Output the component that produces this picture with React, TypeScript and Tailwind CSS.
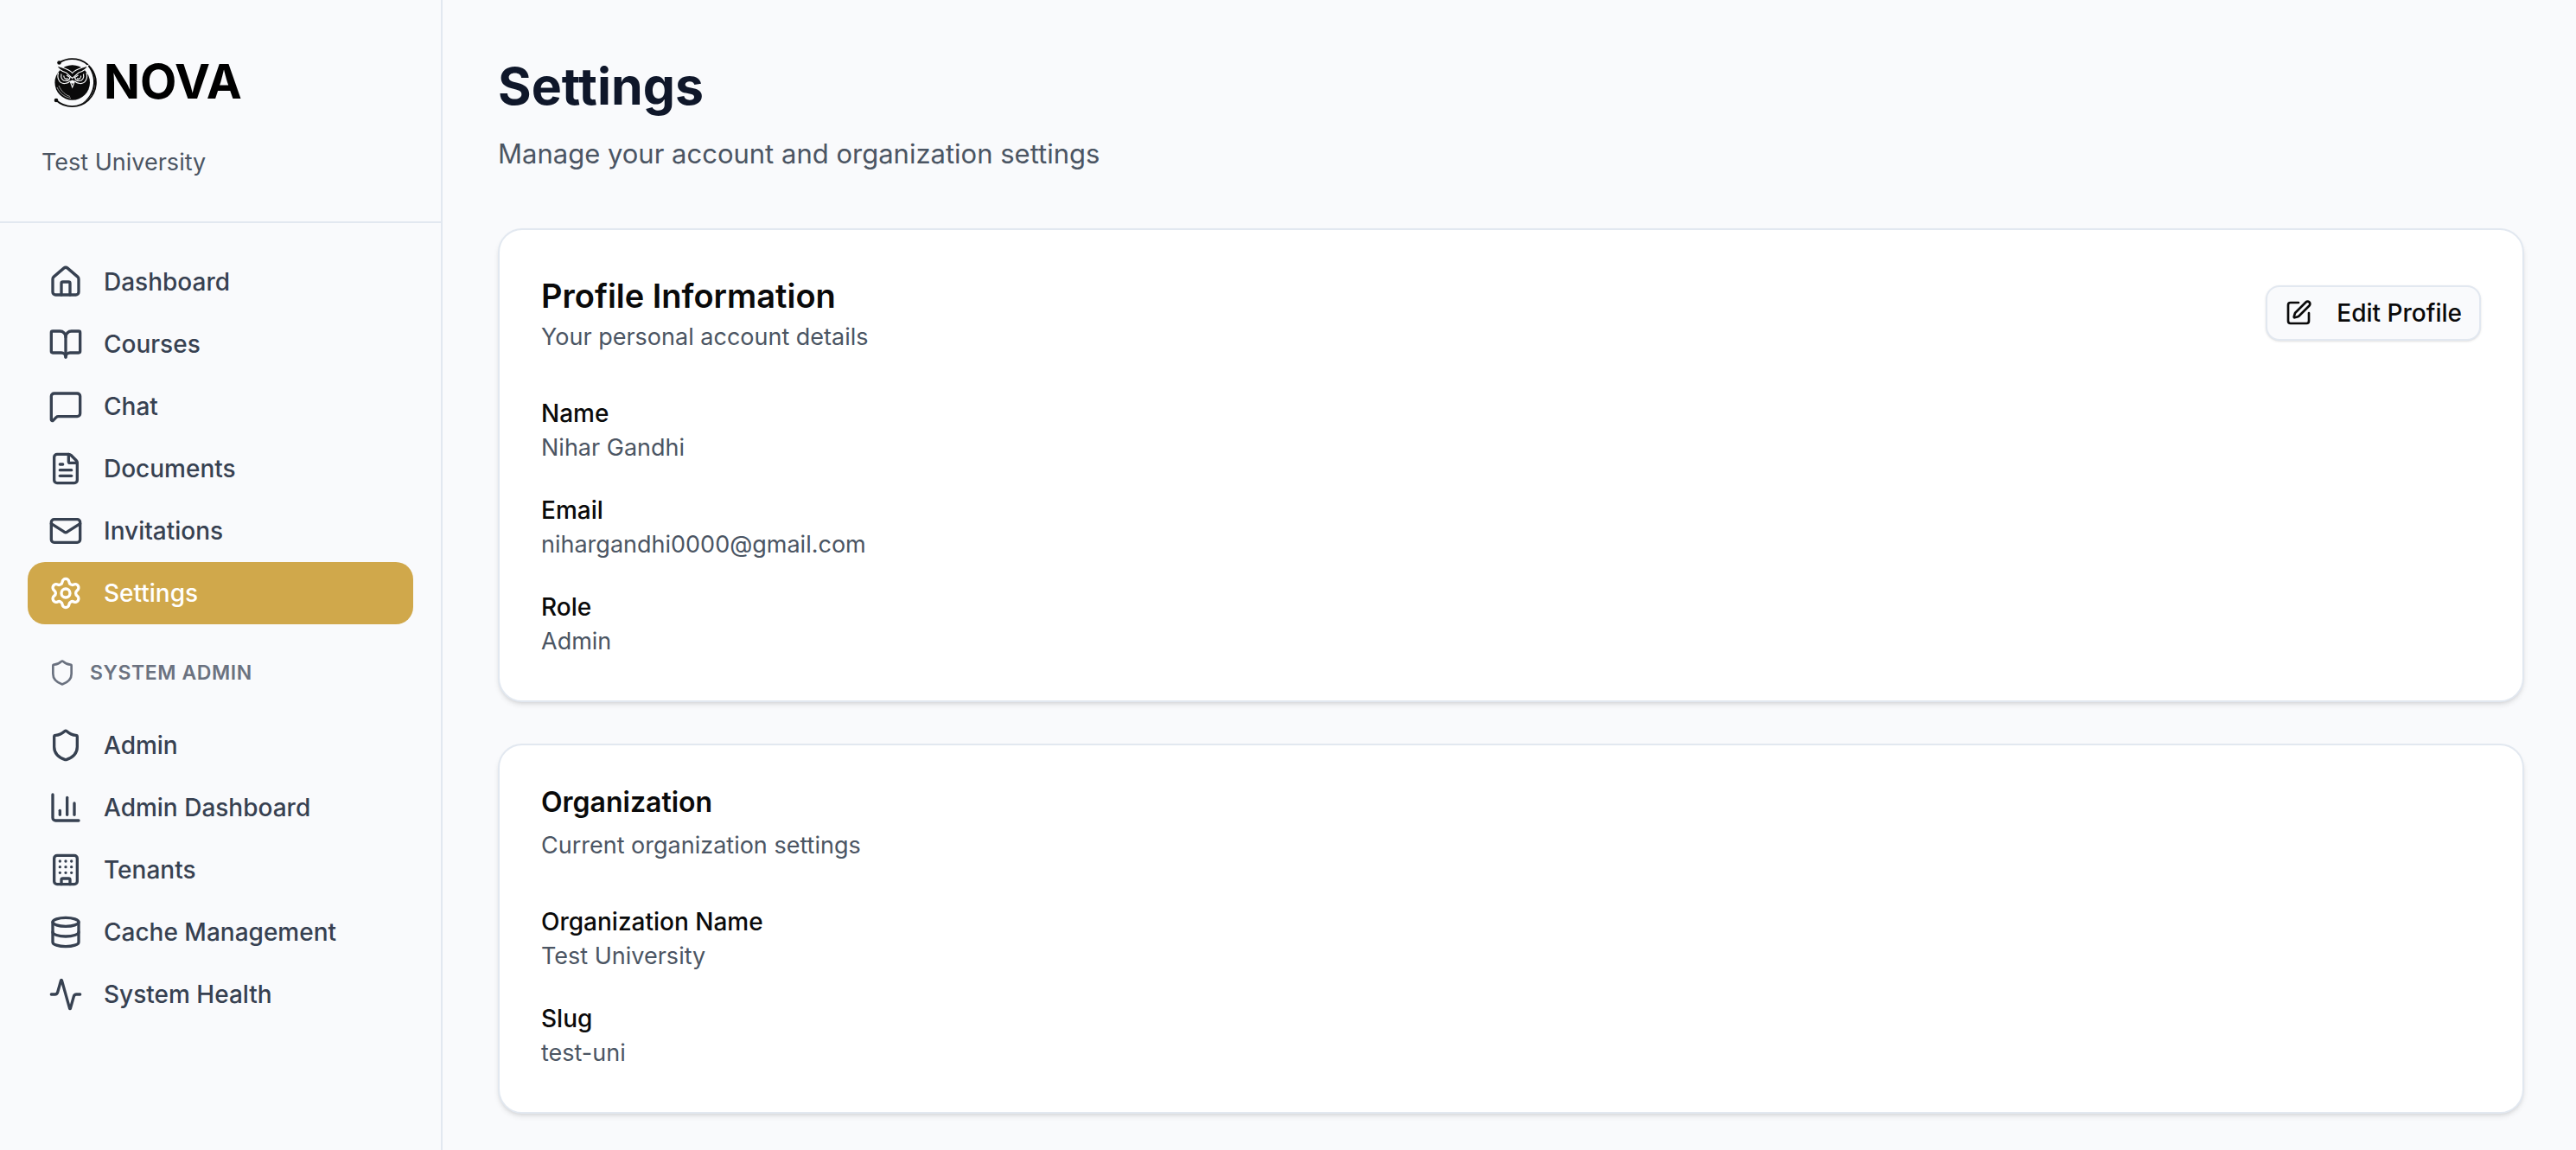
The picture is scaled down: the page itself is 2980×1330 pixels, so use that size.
import React from 'react';
import { House, BookOpen, MessageSquare, FileText, Mail, Settings, Shield, SquarePen, Activity, Database } from 'lucide-react';

interface NavItem {
  label: string;
  icon: React.ElementType;
  active?: boolean;
}

const ChartIcon = ({ className }: { className?: string }) => (
  <svg viewBox="0 0 24 24" fill="none" stroke="currentColor" strokeWidth="2" strokeLinecap="round" strokeLinejoin="round" className={className}>
    <path d="M3 3v16a2 2 0 0 0 2 2h16" />
    <path d="M18 17V9" />
    <path d="M13 17V5" />
    <path d="M8 17v-3" />
  </svg>
);

const BuildingIcon = ({ className }: { className?: string }) => (
  <svg viewBox="0 0 24 24" fill="none" stroke="currentColor" strokeWidth="2" strokeLinecap="round" strokeLinejoin="round" className={className}>
    <rect width="16" height="20" x="4" y="2" rx="2" ry="2" />
    <path d="M9 22v-3a1 1 0 0 1 1-1h4a1 1 0 0 1 1 1v3" />
    <path d="M8 6h.01M16 6h.01M12 6h.01M12 10h.01M12 14h.01M16 10h.01M16 14h.01M8 10h.01M8 14h.01" />
  </svg>
);

const OwlLogo = () => (
  <svg viewBox="0 0 52 60" className="h-[60px] w-[52px]" aria-hidden="true">
    {/* orbit ring */}
    <path d="M8.5 8.5A27.5 27.5 0 1 1 5 52" fill="none" stroke="#0a0a0a" strokeWidth="1.8" />
    <path d="M36 7A27.5 27.5 0 0 1 33 56.500A29.500 29.500 0 0 0 36 7Z" fill="#0a0a0a" />
    <circle cx="8.500" cy="8.500" r="2.300" fill="#0a0a0a" />
    <circle cx="5" cy="52" r="2.300" fill="#0a0a0a" />
    {/* body */}
    <circle cx="23.700" cy="31.500" r="20.300" fill="#0a0a0a" />
    <path d="M6 37C9 44 15 48.500 22 49.500M8 35C11 42 16 46 21 47.500" fill="none" stroke="#f9fafb" strokeWidth="0.600" />
    {/* eye discs */}
    <path d="M7.500 20C5.500 27 9 33 15 32.500C18 32.500 20 31 21 29.500M40 20C42 27 38.500 33 32.500 32.500C29.500 32.500 27.500 31 26.500 29.500" fill="none" stroke="#f9fafb" strokeWidth="1.200" />
    <path d="M11 21.500C10 26 12 29.500 16 29.500C19 29.500 20.500 27.500 21 25.500L17 23M36.500 21.500C37.500 26 35.500 29.500 31.500 29.500C28.500 29.500 27 27.500 26.500 25.500L30.500 23" fill="none" stroke="#f9fafb" strokeWidth="1.200" />
    <path d="M14 23.500A2.800 2.800 0 0 0 18.500 26.500M33.500 23.500A2.800 2.800 0 0 1 29 26.500" fill="none" stroke="#f9fafb" strokeWidth="1.200" />
    {/* brows */}
    <path d="M5.500 11.500C11 14.500 19 14.500 23.700 20.500C28.500 14.500 36.500 14.500 42 11.500C40 16.500 36 18.500 31 20L23.700 26.500L16.500 20C11.500 18.500 7.500 16.500 5.500 11.500Z" fill="#0a0a0a" stroke="#f9fafb" strokeWidth="1.100" />
    {/* beak */}
    <path d="M20.500 30L23.700 28.500L27 30L23.700 38.500Z" fill="#f9fafb" />
    <path d="M22.300 31.500L23.700 33L25.100 31.500L23.700 35.500Z" fill="#0a0a0a" />
  </svg>
);

const mainItems: NavItem[] = [
  { label: 'Dashboard', icon: House },
  { label: 'Courses', icon: BookOpen },
  { label: 'Chat', icon: MessageSquare },
  { label: 'Documents', icon: FileText },
  { label: 'Invitations', icon: Mail },
  { label: 'Settings', icon: Settings, active: true },
];

const adminItems: NavItem[] = [
  { label: 'Admin', icon: Shield },
  { label: 'Admin Dashboard', icon: ChartIcon },
  { label: 'Tenants', icon: BuildingIcon },
  { label: 'Cache Management', icon: Database },
  { label: 'System Health', icon: Activity },
];

const NavLink = ({ item }: { item: NavItem }) => {
  const Icon = item.icon;
  return (
    <a
      href="#"
      className={
        item.active
          ? 'flex items-center gap-6 rounded-[20px] bg-[#d0a84b] px-6 py-4 text-[28px] leading-10 font-medium text-white'
          : 'flex items-center gap-6 rounded-[20px] px-6 py-4 text-[28px] leading-10 font-medium text-[#374151]'
      }
    >
      <Icon className="size-10 shrink-0" />
      {item.label}
    </a>
  );
};

const Field = ({ label, value }: { label: string; value: string }) => (
  <div>
    <dt className="text-[28px] font-medium text-[#0a0a0a]">{label}</dt>
    <dd className="text-[27px] text-[#4b5563]">{value}</dd>
  </div>
);

const App = () => {
  return (
    <div className="flex min-h-screen bg-[#f9fafc] font-['Inter',sans-serif]">
      <aside className="w-[512px] shrink-0 border-r-2 border-[#e2e8f0]">
        <div className="border-b-2 border-[#e2e8f0] px-12 pt-16 pb-12">
          <div className="flex items-center gap-2 pl-3">
            <OwlLogo />
            <span className="text-[55px] leading-[60px] font-bold text-black">NOVA</span>
          </div>
          <p className="mt-11 text-[27px] leading-10 text-[#4b5563]">Test University</p>
        </div>
        <nav className="px-8 py-8">
          {mainItems.map((item) => (
            <NavLink key={item.label} item={item} />
          ))}
          <div className="mt-6 mb-4 flex items-center gap-4 px-6 py-4 text-[23px] leading-8 font-semibold tracking-wide text-[#6b7280] uppercase">
            <Shield className="size-8 shrink-0" />
            System Admin
          </div>
          {adminItems.map((item) => (
            <NavLink key={item.label} item={item} />
          ))}
        </nav>
      </aside>

      <main className="min-w-0 flex-1 py-16 pr-15 pl-16">
        <header className="mb-15">
          <h1 className="text-[59px] leading-[72px] font-bold text-[#0f172a]">Settings</h1>
          <p className="mt-4 text-[31px] leading-13 text-[#4b5563]">Manage your account and organization settings</p>
        </header>

        <section className="mb-12 rounded-[28px] border-2 border-[#e2e8f0] bg-white p-12 shadow-md">
          <div className="flex items-center justify-between">
            <div>
              <h2 className="text-[38px] leading-14 font-semibold text-[#0a0a0a]">Profile Information</h2>
              <p className="text-[27px] leading-10 text-[#4b5563]">Your personal account details</p>
            </div>
            <button type="button" className="flex h-16 items-center gap-7 rounded-2xl border-2 border-[#e2e8f0] bg-[#f9fafc] px-5 text-[28px] font-medium text-[#0a0a0a] shadow-sm">
              <SquarePen className="size-8" />
              Edit Profile
            </button>
          </div>
          <dl className="mt-12 flex flex-col gap-8 leading-10">
            <Field label="Name" value="Nihar Gandhi" />
            <Field label="Email" value="nihargandhi0000@gmail.com" />
            <Field label="Role" value="Admin" />
          </dl>
        </section>

        <section className="rounded-[28px] border-2 border-[#e2e8f0] bg-white p-12 shadow-md">
          <h2 className="text-[32px] leading-9 font-semibold text-[#0a0a0a]">Organization</h2>
          <p className="mt-3 text-[27px] leading-10 text-[#4b5563]">Current organization settings</p>
          <dl className="mt-12 flex flex-col gap-8 leading-10">
            <Field label="Organization Name" value="Test University" />
            <Field label="Slug" value="test-uni" />
          </dl>
        </section>
      </main>
    </div>
  );
};

export default App;
